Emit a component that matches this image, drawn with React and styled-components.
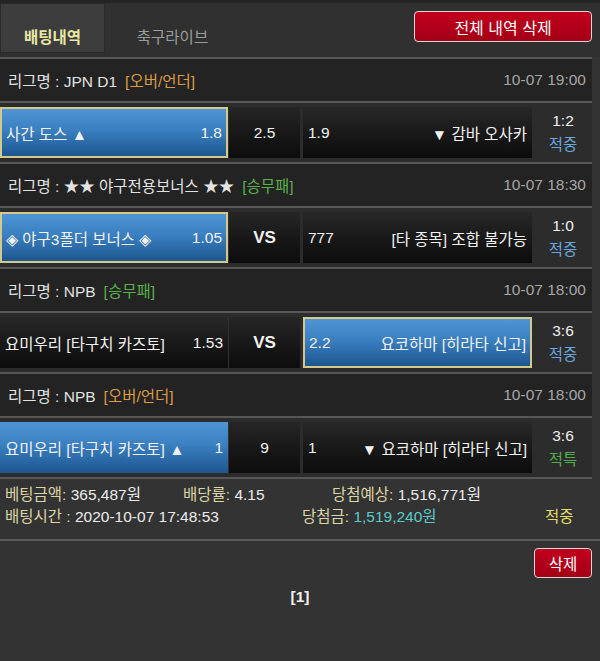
import React from "react";
import styled, { createGlobalStyle, css } from "styled-components";

const GlobalStyle = createGlobalStyle`
  html, body {
    margin: 0;
    padding: 0;
    background: #333333;
  }
  body {
    font-family: "Liberation Sans", Arial, "Noto Sans CJK KR", sans-serif;
    font-size: 15.5px;
    color: #ececec;
  }
  * { box-sizing: border-box; }
`;

const Page = styled.div`
  width: 600px;
  min-height: 661px;
  background: #333333;
`;

const TopBar = styled.div`
  display: flex;
  align-items: flex-start;
  height: 57px;
  background: #303030;
  border-top: 3px solid #242424;
`;

const Tab = styled.div`
  display: flex;
  align-items: center;
  justify-content: center;
  width: ${(p) => (p.$active ? "105px" : "135px")};
  height: 50px;
  padding-top: 16px;
  font-size: 15.5px;
  ${(p) =>
    p.$active
      ? css`
          background: #3d3d3d;
          border: 1px solid #2a2a2a;
          color: #e9e7a4;
          font-weight: bold;
        `
      : css`
          color: #9c9c9c;
        `}
`;

const RedButton = styled.button`
  font-family: inherit;
  font-size: ${(p) => (p.$large ? "16px" : "15.5px")};
  color: #ffffff;
  background: linear-gradient(#c2001d, #a30016);
  border: 1px solid #d8d8d8;
  border-radius: 4px;
  height: ${(p) => (p.$large ? "31px" : "30px")};
  padding: 0;
  width: ${(p) => p.$width};
  cursor: pointer;
`;

const TopButton = styled(RedButton)`
  margin-left: auto;
  margin-right: 8px;
  margin-top: 8px;
`;

const BetList = styled.div`
  width: 592px;
  border-top: 2px solid #575757;
`;

const LeagueHeader = styled.div`
  display: flex;
  align-items: center;
  justify-content: space-between;
  height: 44px;
  padding: 0 6px 0 8px;
  background: #232323;
  border-bottom: 2px solid #575757;
  color: #e2e2e2;
`;

const Tag = styled.span`
  margin-left: 8px;
  color: ${(p) => (p.$kind === "ou" ? "#dc9b45" : "#5bb04c")};
`;

const Time = styled.span`
  color: #a6a6a6;
`;

const MatchRow = styled.div`
  display: grid;
  grid-template-columns: 228px 72px 232px 1fr;
  align-items: stretch;
  padding: 4px 0;
  background: #2c2c2c;
  border-bottom: 2px solid #575757;
`;

const Cell = styled.div`
  display: flex;
  align-items: center;
  justify-content: space-between;
  height: 51px;
  padding: 0 ${(p) => (p.$bordered ? "4px" : "5px")};
  color: #f2f2f2;
  white-space: nowrap;
  background: ${(p) =>
    p.$picked
      ? "linear-gradient(#4f95d6 0%, #3a7fc0 45%, #1d5690 100%)"
      : "linear-gradient(#282828 0%, #181818 55%, #0c0c0c 100%)"};
  border: ${(p) => (p.$bordered ? "2px solid #d3c98b" : "none")};
  ${(p) =>
    p.$away &&
    css`
      margin-left: 3px;
    `}
`;

const CenterCell = styled.div`
  display: flex;
  align-items: center;
  justify-content: center;
  height: 51px;
  background: linear-gradient(#262626 0%, #171717 55%, #0d0d0d 100%);
  border-left: 1px solid #303030;
  color: #f2f2f2;
  font-size: ${(p) => (p.$vs ? "17px" : "15.5px")};
  font-weight: ${(p) => (p.$vs ? "bold" : "normal")};
`;

const Result = styled.div`
  display: flex;
  flex-direction: column;
  align-items: center;
  justify-content: center;
  line-height: 24px;
  padding-left: 2px;
  color: #f0f0f0;
`;

const ResultState = styled.span`
  color: ${(p) => (p.$state === "적특" ? "#4fae4a" : "#69a7dc")};
`;

const Summary = styled.div`
  padding: 5px 0 11px 5px;
  border-bottom: 2px solid #5a5a5a;
  line-height: 22px;
`;

const SummaryRow = styled.div`
  display: flex;
  white-space: nowrap;
`;

const SummaryItem = styled.div`
  width: ${(p) => p.$width || "auto"};
  color: #ececec;
`;

const Label = styled.span`
  color: #ddd5a6;
`;

const Value = styled.span`
  color: ${(p) => p.$color || "#ececec"};
`;

const Footer = styled.div`
  display: flex;
  flex-direction: column;
  align-items: stretch;
`;

const FooterActions = styled.div`
  display: flex;
  justify-content: flex-end;
  padding: 7px 8px 0 0;
`;

const Pagination = styled.div`
  margin-top: 9px;
  line-height: 20px;
  text-align: center;
  font-weight: bold;
  color: #f2f2f2;
`;

const bets = [
  {
    league: "JPN D1",
    tag: { kind: "ou", text: "[오버/언더]" },
    time: "10-07 19:00",
    home: { name: "사간 도스 ▲", odds: "1.8", picked: true, bordered: true },
    center: { text: "2.5" },
    away: { name: "▼ 감바 오사카", odds: "1.9" },
    score: "1:2",
    state: "적중",
  },
  {
    league: "★★ 야구전용보너스 ★★",
    tag: { kind: "wdl", text: "[승무패]" },
    time: "10-07 18:30",
    home: { name: "◈ 야구3폴더 보너스 ◈", odds: "1.05", picked: true, bordered: true },
    center: { text: "VS", vs: true },
    away: { name: "[타 종목] 조합 불가능", odds: "777" },
    score: "1:0",
    state: "적중",
  },
  {
    league: "NPB",
    tag: { kind: "wdl", text: "[승무패]" },
    time: "10-07 18:00",
    home: { name: "요미우리 [타구치 카즈토]", odds: "1.53" },
    center: { text: "VS", vs: true },
    away: { name: "요코하마 [히라타 신고]", odds: "2.2", picked: true, bordered: true },
    score: "3:6",
    state: "적중",
  },
  {
    league: "NPB",
    tag: { kind: "ou", text: "[오버/언더]" },
    time: "10-07 18:00",
    home: { name: "요미우리 [타구치 카즈토] ▲", odds: "1", picked: true },
    center: { text: "9" },
    away: { name: "▼ 요코하마 [히라타 신고]", odds: "1" },
    score: "3:6",
    state: "적특",
  },
];

function BetBlock({ bet }) {
  return (
    <>
      <LeagueHeader>
        <span>
          리그명 : {bet.league}
          <Tag $kind={bet.tag.kind}>{bet.tag.text}</Tag>
        </span>
        <Time>{bet.time}</Time>
      </LeagueHeader>
      <MatchRow>
        <Cell $picked={bet.home.picked} $bordered={bet.home.bordered}>
          <span>{bet.home.name}</span>
          <span>{bet.home.odds}</span>
        </Cell>
        <CenterCell $vs={bet.center.vs}>{bet.center.text}</CenterCell>
        <Cell $away $picked={bet.away.picked} $bordered={bet.away.bordered}>
          <span>{bet.away.odds}</span>
          <span>{bet.away.name}</span>
        </Cell>
        <Result>
          <span>{bet.score}</span>
          <ResultState $state={bet.state}>{bet.state}</ResultState>
        </Result>
      </MatchRow>
    </>
  );
}

export default function App() {
  return (
    <Page>
      <GlobalStyle />
      <TopBar>
        <Tab $active>배팅내역</Tab>
        <Tab>축구라이브</Tab>
        <TopButton $large $width="178px">
          전체 내역 삭제
        </TopButton>
      </TopBar>
      <BetList>
        {bets.map((b, i) => (
          <BetBlock key={i} bet={b} />
        ))}
      </BetList>
      <Summary>
        <SummaryRow>
          <SummaryItem $width="178px">
            <Label>베팅금액:</Label> <Value>365,487원</Value>
          </SummaryItem>
          <SummaryItem $width="149px">
            <Label>배당률:</Label> <Value>4.15</Value>
          </SummaryItem>
          <SummaryItem>
            <Label>당첨예상:</Label> <Value>1,516,771원</Value>
          </SummaryItem>
        </SummaryRow>
        <SummaryRow>
          <SummaryItem $width="297px">
            <Label>배팅시간 :</Label> <Value>2020-10-07 17:48:53</Value>
          </SummaryItem>
          <SummaryItem $width="243px">
            <Label>당첨금:</Label> <Value $color="#5ec9c9">1,519,240원</Value>
          </SummaryItem>
          <SummaryItem>
            <Value $color="#e2df62">적중</Value>
          </SummaryItem>
        </SummaryRow>
      </Summary>
      <Footer>
        <FooterActions>
          <RedButton $width="58px">삭제</RedButton>
        </FooterActions>
        <Pagination>[1]</Pagination>
      </Footer>
    </Page>
  );
}
